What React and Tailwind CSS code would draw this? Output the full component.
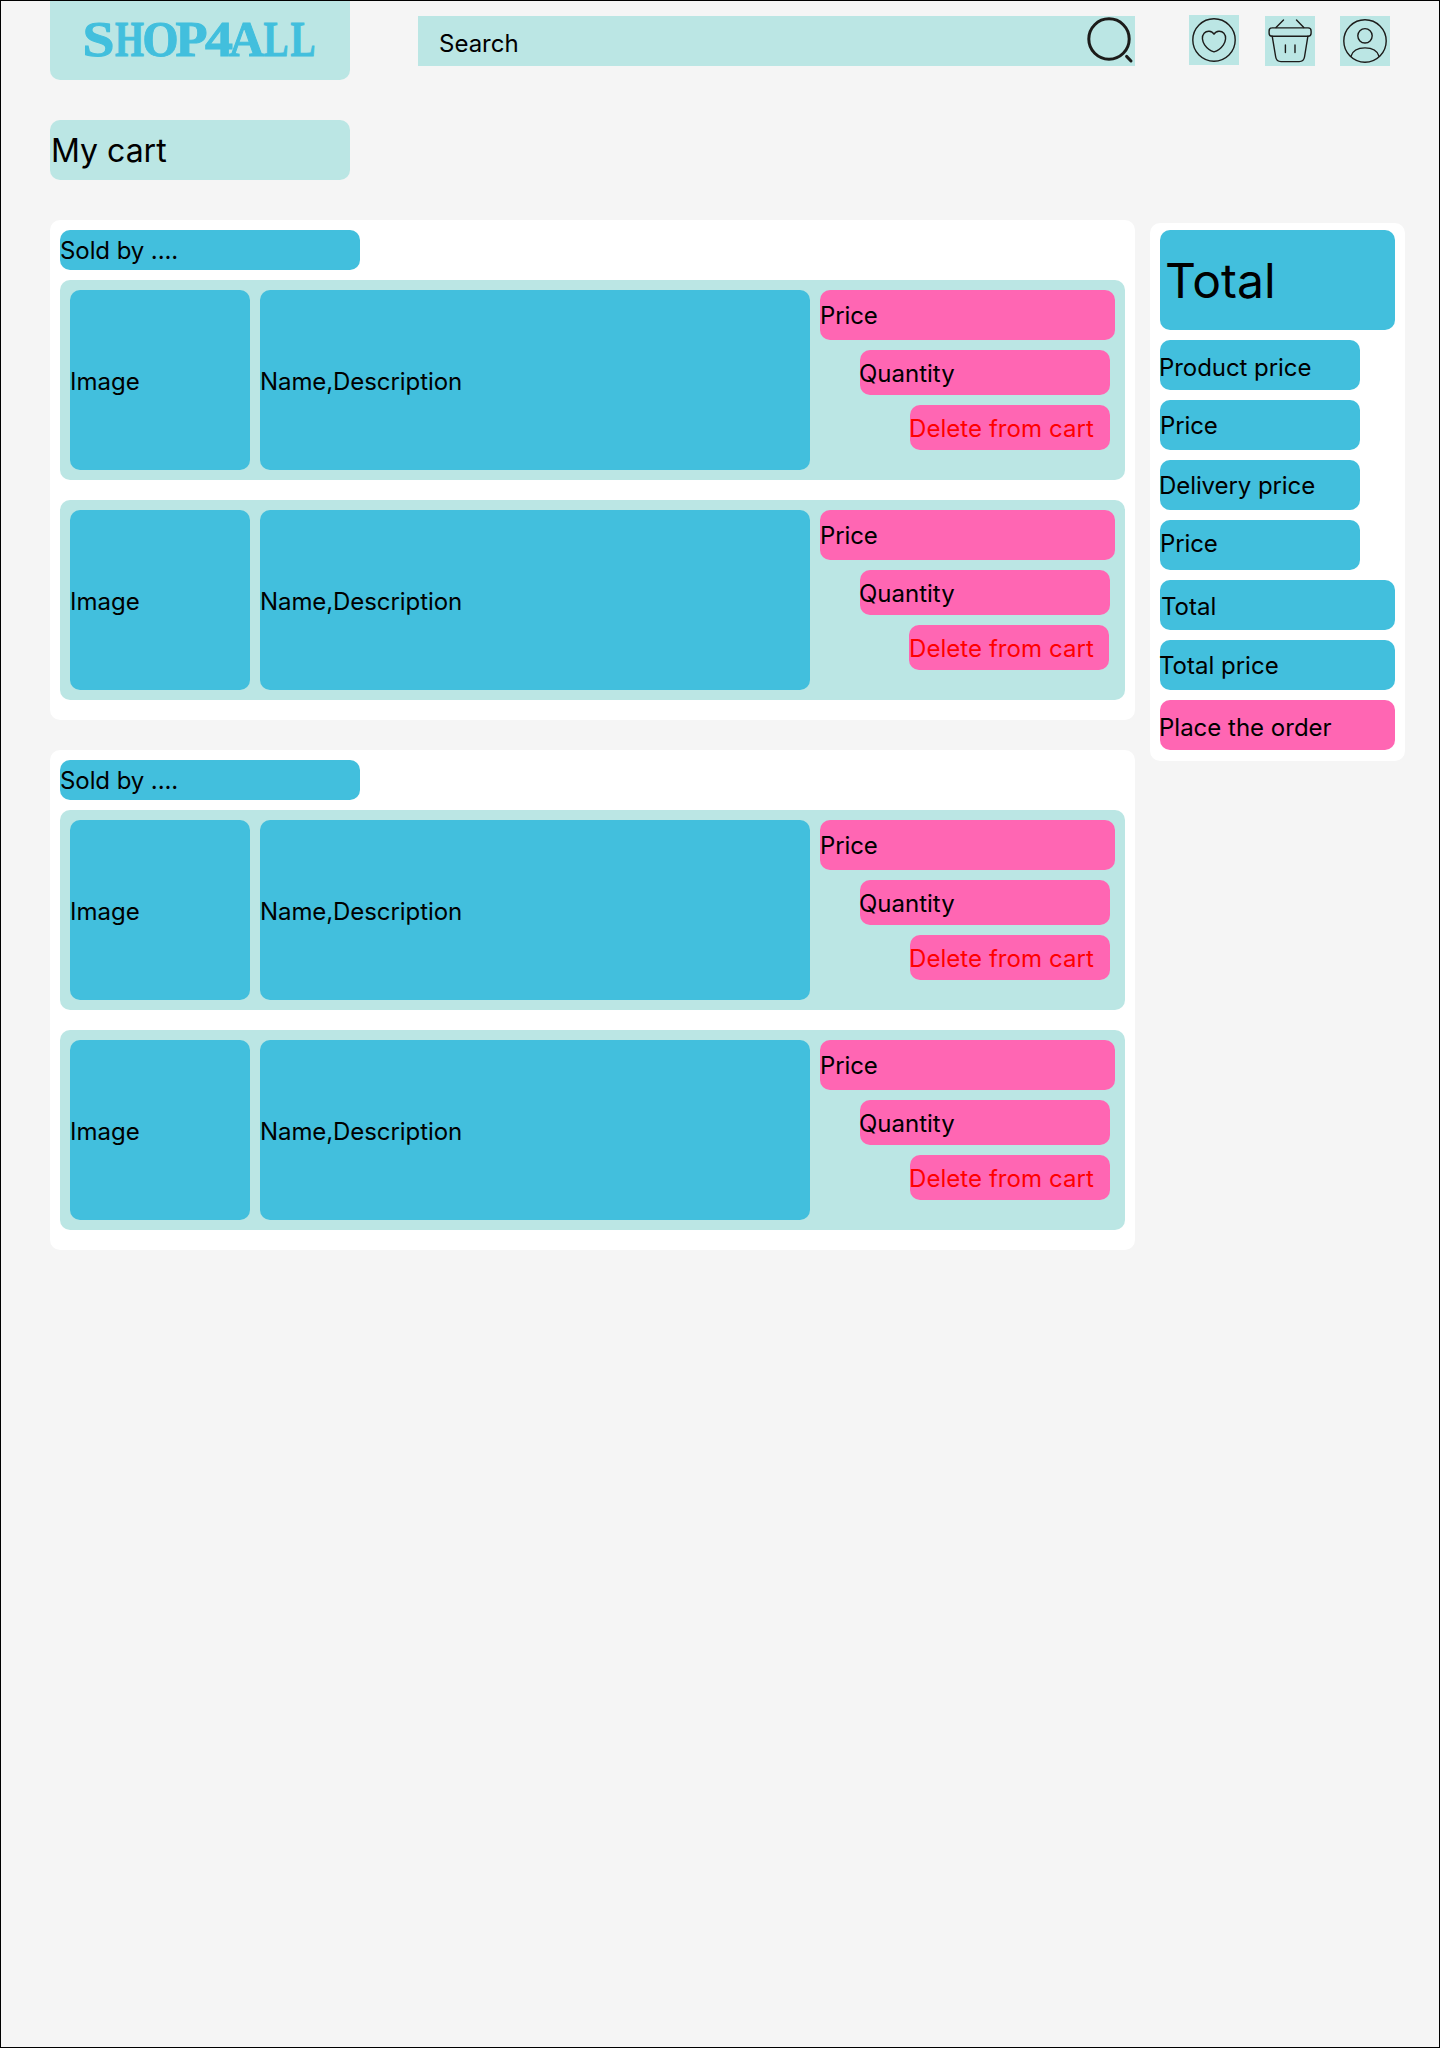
function SearchIcon() {
  return (
    <svg className="h-[50px] w-[50px]" viewBox="0 0 50 50" fill="none" stroke="#1c1c1a">
      <circle cx="24" cy="23" r="20.2" strokeWidth="3" />
      <path d="M41.6 40.4L46 45" strokeWidth="3" strokeLinecap="round" />
    </svg>
  );
}

function HeartIcon() {
  return (
    <svg className="h-[50px] w-[50px] bg-[#bbe6e4]" viewBox="0 0 50 50" fill="none" stroke="#1c1c1a" strokeWidth="1.4" strokeLinejoin="round">
      <circle cx="25" cy="25" r="21.2" />
      <path d="M25 19.2C22.8 15.4 17.6 15.5 15.1 18.2C12.3 21.4 13.3 26.4 15.6 29.8C18 33.3 21.2 35.7 25 36.8C28.8 35.7 32 33.3 34.4 29.8C36.7 26.4 37.7 21.4 34.9 18.2C32.4 15.5 27.2 15.4 25 19.2Z" />
    </svg>
  );
}

function BasketIcon() {
  return (
    <svg className="h-[50px] w-[50px] bg-[#bbe6e4]" viewBox="0 0 50 50" fill="none" stroke="#1c1c1a" strokeWidth="1.4" strokeLinecap="round" strokeLinejoin="round">
      <path d="M11 11.5L18.5 4M38.8 11.5L31.5 4" />
      <rect x="4.1" y="11.9" width="42" height="8.3" rx="3" />
      <path d="M7.2 20.2L10.7 41Q11.5 45.6 16 45.6H34.2Q38.7 45.6 39.5 41L42.9 20.2" />
      <path d="M20.4 29V36.5M30 29V36.5" />
    </svg>
  );
}

function UserIcon() {
  return (
    <svg className="h-[50px] w-[50px] bg-[#bbe6e4]" viewBox="0 0 50 50" fill="none" stroke="#1c1c1a" strokeWidth="1.4" strokeLinecap="round">
      <circle cx="25" cy="25" r="21.2" />
      <circle cx="25" cy="19.8" r="7.2" />
      <path d="M11 40.2C12.6 34.9 18.1 31.9 25 31.9C31.9 31.9 37.4 34.9 39 40.2" />
    </svg>
  );
}

const logoLetters = [
  { char: "S", x: 32.5, width: 32 },
  { char: "H", x: 65, width: 29 },
  { char: "O", x: 92.5, width: 36 },
  { char: "P", x: 125.5, width: 32 },
  { char: "4", x: 155, width: 28 },
  { char: "A", x: 179, width: 35 },
  { char: "L", x: 213.5, width: 25 },
  { char: "L", x: 240.5, width: 25 },
];

function Logo() {
  return (
    <svg className="h-full w-full" viewBox="0 0 300 79">
      <text y="55" fill="#42bfdd" stroke="#42bfdd" strokeWidth="1" className="font-['Liberation_Serif',serif] text-[50px] font-bold">
        {logoLetters.map((l, i) => (
          <tspan key={i} x={l.x} textLength={l.width} lengthAdjust="spacingAndGlyphs">{l.char}</tspan>
        ))}
      </text>
    </svg>
  );
}

function Product({ deleteClass = "ml-[90px] -indent-px" }) {
  return (
    <article className="flex h-[200px] gap-2.5 rounded-[10px] bg-[#bbe6e4] p-2.5">
      <div className="w-[180px] rounded-[10px] bg-[#42bfdd] pt-[77px]">Image</div>
      <div className="w-[550px] rounded-[10px] bg-[#42bfdd] pt-[77px] tracking-[-0.08px]">Name,Description</div>
      <div className="flex w-[295px] flex-col gap-2.5">
        <div className="h-[50px] rounded-[10px] bg-[#ff66b3] pt-[11px] tracking-[-0.1px]">Price</div>
        <div className="ml-10 h-[45px] w-[250px] rounded-[10px] bg-[#ff66b3] pt-[9px] -indent-px">Quantity</div>
        <button className={`h-[45px] w-[200px] rounded-[10px] bg-[#ff66b3] pt-[9px] pb-[7px] text-left tracking-[0.06px] whitespace-nowrap text-[#ff0000] ${deleteClass}`}>
          Delete from cart
        </button>
      </div>
    </article>
  );
}

function SellerGroup({ children }) {
  return (
    <section className="h-[500px] rounded-[10px] bg-white p-2.5">
      <h2 className="h-10 w-[300px] rounded-[10px] bg-[#42bfdd] pt-1.5 tracking-[-0.08px]">Sold by ....</h2>
      <div className="mt-2.5 flex flex-col gap-5">{children}</div>
    </section>
  );
}

const summary = [
  { label: "Product price", style: "w-[200px] bg-[#42bfdd] pt-[13px] -indent-px tracking-[-0.06px]" },
  { label: "Price", style: "w-[200px] bg-[#42bfdd] pt-[11px] tracking-[-0.1px]" },
  { label: "Delivery price", style: "w-[200px] bg-[#42bfdd] pt-[11px] -indent-px tracking-[-0.08px]" },
  { label: "Price", style: "w-[200px] bg-[#42bfdd] pt-[9px] tracking-[-0.1px]" },
  { label: "Total", style: "bg-[#42bfdd] pt-3 indent-px" },
  { label: "Total price", style: "bg-[#42bfdd] pt-[11px] -indent-px" },
  { label: "Place the order", style: "bg-[#ff66b3] pt-[13px] -indent-px" },
];

export default function App() {
  return (
    <div className="h-[2048px] w-[1440px] border border-black bg-[#f5f5f5] pl-[49px] font-['Inter',sans-serif] text-[24px] leading-[29px] text-black">
      <header className="flex items-start">
        <div className="h-[79px] w-[300px] rounded-b-[10px] bg-[#bbe6e4]">
          <Logo />
        </div>
        <div className="mt-[15px] ml-[68px] flex h-[50px] w-[717px] justify-between bg-[#bbe6e4] pl-[21px]">
          <span className="pt-[13px]">Search</span>
          <SearchIcon />
        </div>
        <nav className="mt-[15px] ml-[54px] flex">
          <div className="-mt-px mr-[26px]"><HeartIcon /></div>
          <div className="mr-[25px]"><BasketIcon /></div>
          <UserIcon />
        </nav>
      </header>

      <h1 className="mt-10 h-[60px] w-[300px] rounded-[10px] bg-[#bbe6e4] pt-[11px] pl-px text-[32px] leading-[39px]">My cart</h1>

      <main className="mt-10 flex items-start gap-[15px]">
        <div className="flex w-[1085px] flex-col gap-[30px]">
          <SellerGroup>
            <Product />
            <Product deleteClass="ml-[89px]" />
          </SellerGroup>
          <SellerGroup>
            <Product />
            <Product />
          </SellerGroup>
        </div>
        <aside className="mt-[3px] flex h-[538px] w-[255px] flex-col gap-2.5 rounded-[10px] bg-white px-2.5 pt-[7px]">
          <h2 className="h-[100px] rounded-[10px] bg-[#42bfdd] pt-[22px] pl-[5px] text-[48px] leading-[58px]">Total</h2>
          {summary.map((row, i) => (
            <div key={i} className={`h-[50px] shrink-0 rounded-[10px] ${row.style}`}>{row.label}</div>
          ))}
        </aside>
      </main>
    </div>
  );
}
